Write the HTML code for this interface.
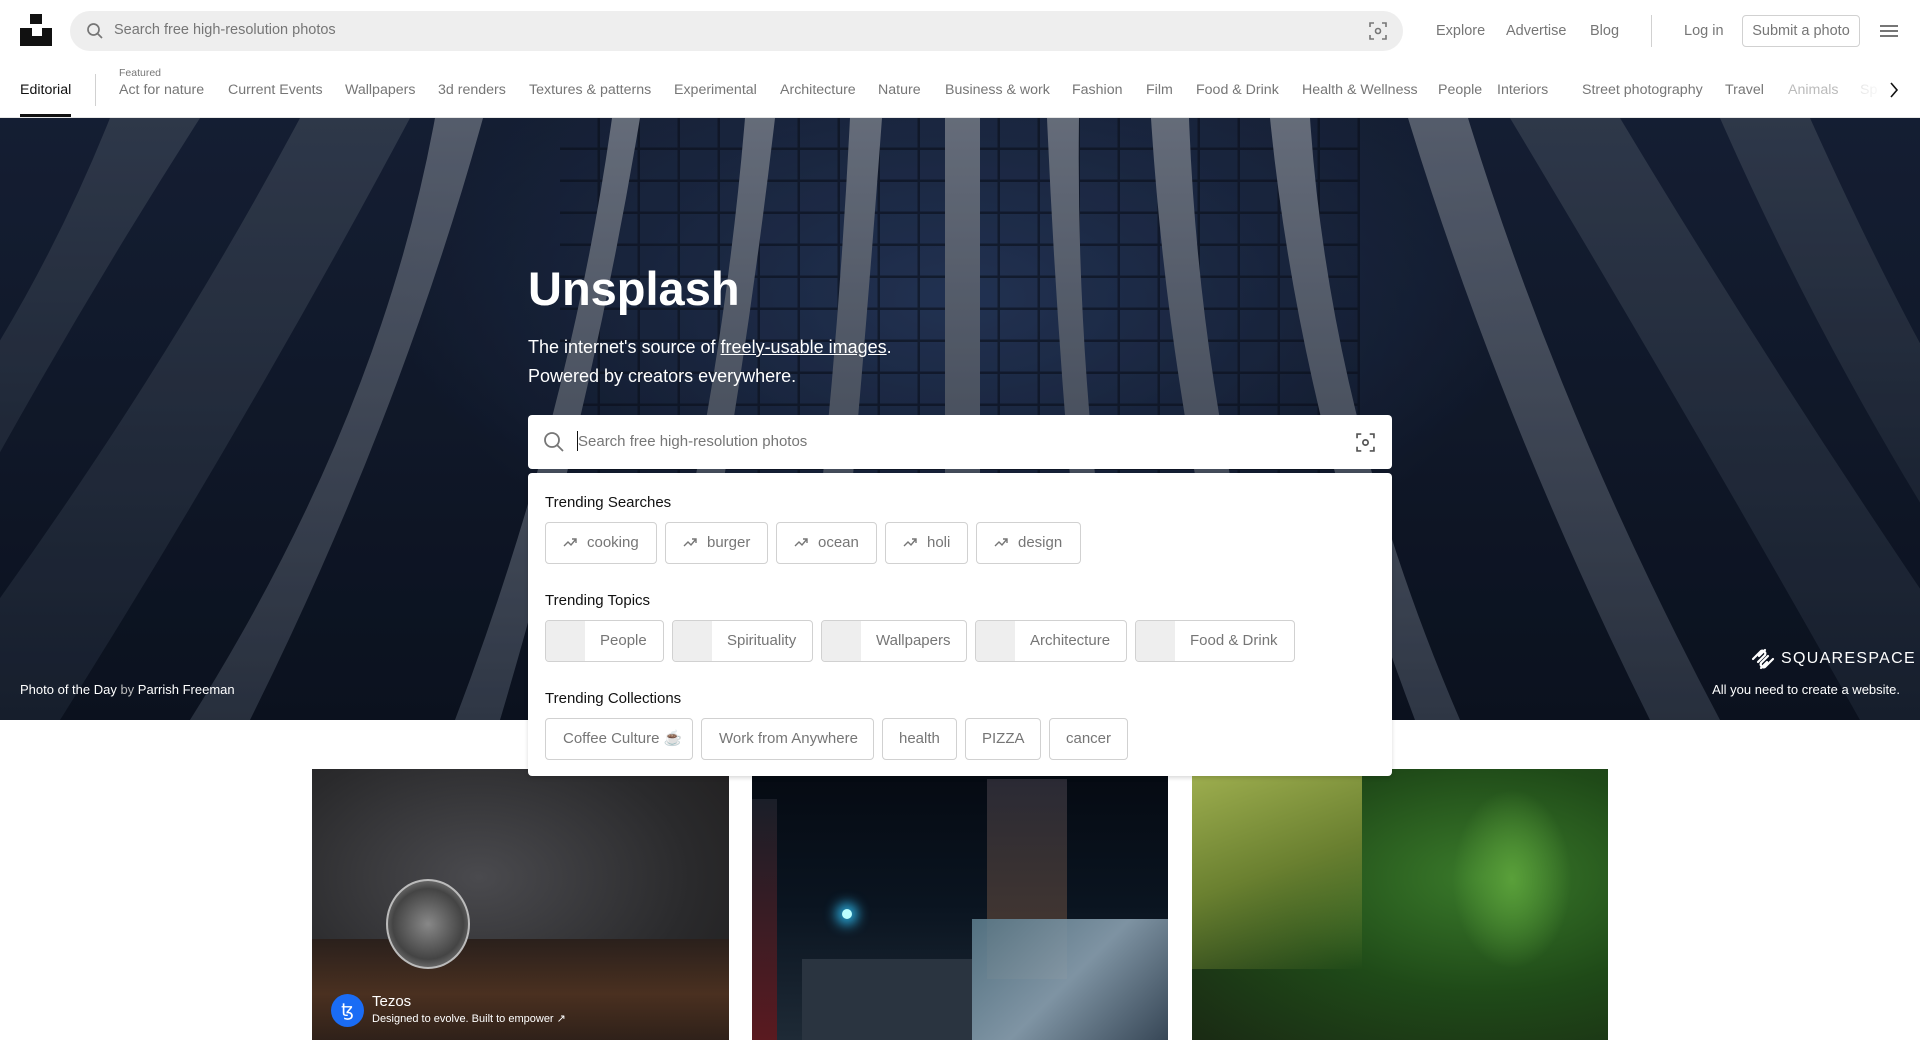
<!DOCTYPE html>
<html><head><meta charset="utf-8"><style>
*{box-sizing:border-box;margin:0;padding:0}
body{width:1920px;height:1040px;overflow:hidden;background:#fff;font-family:"Liberation Sans",sans-serif;position:relative}
.abs{position:absolute}
.top a{color:#767676;font-size:14.5px;text-decoration:none}
.cats{position:absolute;top:62px;left:0;width:1920px;height:56px;border-bottom:1px solid #e7e7e7}
.cats span{position:absolute;top:20px;font-size:14.2px;color:#767676;white-space:nowrap}
.chip{position:absolute;height:42px;border:1px solid #d1d1d1;border-radius:4px;color:#767676;font-size:15px;line-height:40px;background:#fff;white-space:nowrap}
.h{position:absolute;left:17px;font-size:15px;color:#111}
.tp i{position:absolute;left:0;top:0;width:39px;height:40px;background:#eee;border-radius:3px 0 0 3px}
</style></head><body>
<div class="abs" style="left:30px;top:14px;width:12px;height:10px;background:#111"></div>
<div class="abs" style="left:20px;top:28px;width:32px;height:18px;background:#111"></div>
<div class="abs" style="left:32px;top:28px;width:10px;height:8px;background:#fff"></div>
<div class="abs" style="left:70px;top:11px;width:1333px;height:40px;background:#eee;border-radius:20px"></div>
<svg class="abs" style="left:86px;top:22px" width="18" height="18" viewBox="0 0 18 18"><circle cx="7.5" cy="7.5" r="5.5" fill="none" stroke="#767676" stroke-width="1.7"/><path d="M11.5 11.5l4.5 4.5" stroke="#767676" stroke-width="1.7"/></svg>
<div class="abs" style="left:114px;top:22px;font-size:14.5px;color:#767676">Search free high-resolution photos</div>
<svg class="abs" style="left:1369px;top:22px" width="18" height="18" viewBox="0 0 18 18" fill="none" stroke="#767676" stroke-width="1.6"><path d="M1 5V1h4M13 1h4v4M17 13v4h-4M5 17H1v-4"/><circle cx="9" cy="9" r="2.5"/></svg>
<div class="top">
<a class="abs" style="left:1436px;top:23px">Explore</a>
<a class="abs" style="left:1506px;top:23px">Advertise</a>
<a class="abs" style="left:1590px;top:23px">Blog</a>
<div class="abs" style="left:1651px;top:15px;width:1px;height:32px;background:#d1d1d1"></div>
<a class="abs" style="left:1684px;top:23px">Log in</a>
<div class="abs" style="left:1742px;top:15px;width:118px;height:32px;border:1px solid #d1d1d1;border-radius:4px;font-size:14.5px;color:#767676;line-height:30px;text-align:center">Submit a photo</div>
<div class="abs" style="left:1880px;top:25px;width:18px;height:2px;background:#767676;box-shadow:0 5px 0 #767676,0 10px 0 #767676"></div>
</div>
<div class="cats">
<span style="left:20px;color:#111">Editorial</span>
<div class="abs" style="left:20px;top:52px;width:51px;height:3px;background:#111"></div>
<div class="abs" style="left:95px;top:12px;width:1px;height:32px;background:#d1d1d1"></div>
<span style="left:119px;top:5px;font-size:10.5px">Featured</span>
<span style="left:119px">Act for nature</span><span style="left:228px">Current Events</span><span style="left:345px">Wallpapers</span><span style="left:438px">3d renders</span><span style="left:529px">Textures &amp; patterns</span><span style="left:674px">Experimental</span><span style="left:780px">Architecture</span><span style="left:878px">Nature</span><span style="left:945px">Business &amp; work</span><span style="left:1072px">Fashion</span><span style="left:1146px">Film</span><span style="left:1196px">Food &amp; Drink</span><span style="left:1302px">Health &amp; Wellness</span><span style="left:1438px">People</span><span style="left:1497px">Interiors</span><span style="left:1582px">Street photography</span><span style="left:1725px">Travel</span><span style="left:1788px;color:#bbb">Animals</span><span style="left:1860px;color:#ddd">Sp</span>
<div class="abs" style="left:1850px;top:0;width:70px;height:55px;background:linear-gradient(90deg,rgba(255,255,255,0),#fff 50%)"></div>
<svg class="abs" style="left:1888px;top:20px" width="12" height="16" viewBox="0 0 12 16"><path d="M3 1l6 7-6 7" fill="none" stroke="#111" stroke-width="1.6"/></svg>
</div>
<svg class="abs" style="left:0;top:118px" width="1920" height="602" viewBox="0 0 1920 602">
<defs><linearGradient id="bg" x1="0" y1="0" x2="0" y2="1"><stop offset="0" stop-color="#1a2640"/><stop offset="1" stop-color="#0e1626"/></linearGradient>
<radialGradient id="ct" cx=".5" cy=".3" r=".5"><stop offset="0" stop-color="#2a3e66"/><stop offset="1" stop-color="#2a3e66" stop-opacity="0"/></radialGradient>
<pattern id="win" width="40" height="32" patternUnits="userSpaceOnUse"><rect width="40" height="32" fill="none"/><path d="M0 31h40M39 0v32" stroke="#0c1220" stroke-width="3"/></pattern>
<linearGradient id="st" x1="0" y1="0" x2="0" y2="1"><stop offset="0" stop-color="#7e8798"/><stop offset="1" stop-color="#3a4456"/></linearGradient>
<linearGradient id="so" x1="0" y1="0" x2="0" y2="1"><stop offset="0" stop-color="#3a465c"/><stop offset="1" stop-color="#1c2638"/></linearGradient></defs>
<rect width="1920" height="602" fill="url(#bg)"/>
<rect x="400" y="0" width="1120" height="602" fill="url(#ct)"/>
<rect x="560" y="0" width="800" height="500" fill="url(#win)" opacity=".6"/>
<g fill="url(#so)">
<path d="M300 0h110Q250 300 60 602h-150Q140 300 300 0z"/>
<path d="M1510 0h110Q1800 300 2010 602h-150Q1690 300 1510 0z"/>
<path d="M110 0h90Q40 250 -100 520v-150Q30 200 110 0z"/>
<path d="M1720 0h90Q1900 200 1980 330v150Q1830 250 1720 0z"/>
</g>
<g fill="url(#st)">
<path d="M945 0h35v602h-35z"/>
<path d="M850 0h32Q860 300 830 602h-36Q835 300 850 0z"/>
<path d="M1047 0h32Q1075 300 1130 602h-36Q1060 300 1047 0z"/>
<path d="M745 0h30Q740 300 680 602h-40Q720 300 745 0z"/>
<path d="M1151 0h38Q1200 300 1290 602h-40Q1170 300 1151 0z"/>
<path d="M612 0h28Q590 300 500 602h-45Q570 300 612 0z"/>
<path d="M1270 0h40Q1330 300 1460 602h-45Q1300 300 1270 0z"/>
<path d="M435 0h48Q400 300 250 602h-60Q380 300 435 0z" opacity=".8"/>
<path d="M1408 0h60Q1560 300 1720 602h-70Q1500 300 1408 0z" opacity=".8"/>
</g>
<rect width="1920" height="602" fill="#000" opacity=".2"/>
</svg>
<div class="abs" style="left:528px;top:261px;font-size:47px;font-weight:bold;color:#fff">Unsplash</div>
<div class="abs" style="left:528px;top:333px;font-size:18px;color:#fff;line-height:29px">The internet's source of <span style="text-decoration:underline">freely-usable images</span>.<br>Powered by creators everywhere.</div>
<div class="abs" style="left:20px;top:682px;font-size:13px;color:#fff">Photo of the Day <span style="color:#bbb">by</span> Parrish Freeman</div>
<svg class="abs" style="left:1750px;top:647px" width="26" height="24" viewBox="0 0 26 24" fill="none" stroke="#fff" stroke-width="2.2" stroke-linecap="round"><path d="M3 12l8-8a3 3 0 014 4l-7 7M9 9l6-6M23 12l-8 8a3 3 0 01-4-4l7-7M17 15l-6 6"/></svg>
<div class="abs" style="left:1781px;top:650px;font-size:16px;color:#fff;letter-spacing:1.3px">SQUARESPACE</div>
<div class="abs" style="right:20px;top:682px;font-size:13px;color:#fff">All you need to create a website.</div>
<div class="abs" style="left:312px;top:769px;width:417px;height:271px;background:radial-gradient(ellipse at 40% 40%,#4a4a4e,#2a2a2c 60%,#1e1c1c);overflow:hidden">
<div class="abs" style="left:0;top:170px;width:417px;height:110px;background:linear-gradient(#2a201c,#4a3020 50%,#2a1e18)"></div>
<div class="abs" style="left:74px;top:110px;width:84px;height:90px;border-radius:50%;background:radial-gradient(circle,#888,#444 60%,#aaa);border:2px solid #bbb"></div>
<div class="abs" style="left:19px;top:225px;width:33px;height:33px;border-radius:50%;background:#1a6cf5;color:#fff;text-align:center;line-height:33px;font-size:18px">ꜩ</div>
<div class="abs" style="left:60px;top:224px;font-size:15px;color:#fff">Tezos</div>
<div class="abs" style="left:60px;top:243px;font-size:11px;color:#fff">Designed to evolve. Built to empower ↗</div>
</div>
<div class="abs" style="left:752px;top:769px;width:416px;height:271px;background:linear-gradient(180deg,#050a12,#0a1420 50%,#1e2a36);overflow:hidden">
<div class="abs" style="left:0;top:30px;width:25px;height:241px;background:linear-gradient(#1a1e28,#5a1a20)"></div>
<div class="abs" style="left:235px;top:10px;width:80px;height:200px;background:linear-gradient(#2a2a34,#4a3a30)"></div>
<div class="abs" style="left:220px;top:150px;width:196px;height:121px;background:linear-gradient(135deg,#5a7a8a,#8aa0b0 50%,#3a4a5a);opacity:.9"></div>
<div class="abs" style="left:50px;top:190px;width:170px;height:81px;background:#2a3440"></div>
<div class="abs" style="left:90px;top:140px;width:10px;height:10px;border-radius:50%;background:#bff;box-shadow:0 0 12px 6px #2aa8d8"></div>
</div>
<div class="abs" style="left:1192px;top:769px;width:416px;height:271px;background:radial-gradient(ellipse at 70% 40%,#3a7a2a,#1f4a18 50%,#1a2a14);overflow:hidden">
<div class="abs" style="left:0;top:0;width:170px;height:200px;background:linear-gradient(160deg,#a0b050,#6a8030 50%,rgba(40,60,20,0))"></div>
<div class="abs" style="left:260px;top:20px;width:120px;height:180px;background:radial-gradient(ellipse,#5aa03a,rgba(40,90,30,0) 70%)"></div>
</div>
<div class="abs" style="left:528px;top:415px;width:864px;height:54px;background:#fff;border-radius:4px"></div>
<svg class="abs" style="left:543px;top:431px" width="22" height="22" viewBox="0 0 22 22"><circle cx="9" cy="9" r="7" fill="none" stroke="#767676" stroke-width="1.8"/><path d="M14 14l6 6" stroke="#767676" stroke-width="1.8"/></svg>
<div class="abs" style="left:577px;top:431px;width:1px;height:20px;background:#111"></div>
<div class="abs" style="left:578px;top:433px;font-size:15px;color:#767676">Search free high-resolution photos</div>
<svg class="abs" style="left:1356px;top:433px" width="19" height="19" viewBox="0 0 18 18" fill="none" stroke="#555" stroke-width="1.6"><path d="M1 5V1h4M13 1h4v4M17 13v4h-4M5 17H1v-4"/><circle cx="9" cy="9" r="2.5"/></svg>
<div class="abs" style="left:528px;top:473px;width:864px;height:303px;background:#fff;border-radius:4px;box-shadow:0 2px 4px rgba(0,0,0,.15)">
<div class="h" style="top:21px">Trending Searches</div>
<div class="h" style="top:119px">Trending Topics</div>
<div class="h" style="top:217px">Trending Collections</div>
</div>
<div>
<div class="chip" style="left:545px;top:522px;width:112px;padding-left:17px"><svg width="14" height="10" viewBox="0 0 14 10" style="margin-right:10px"><path d="M1 9l4-4 3 3 5-6M9 2h4v4" fill="none" stroke="#767676" stroke-width="1.4"/></svg>cooking</div>
<div class="chip" style="left:665px;top:522px;width:103px;padding-left:17px"><svg width="14" height="10" viewBox="0 0 14 10" style="margin-right:10px"><path d="M1 9l4-4 3 3 5-6M9 2h4v4" fill="none" stroke="#767676" stroke-width="1.4"/></svg>burger</div>
<div class="chip" style="left:776px;top:522px;width:101px;padding-left:17px"><svg width="14" height="10" viewBox="0 0 14 10" style="margin-right:10px"><path d="M1 9l4-4 3 3 5-6M9 2h4v4" fill="none" stroke="#767676" stroke-width="1.4"/></svg>ocean</div>
<div class="chip" style="left:885px;top:522px;width:83px;padding-left:17px"><svg width="14" height="10" viewBox="0 0 14 10" style="margin-right:10px"><path d="M1 9l4-4 3 3 5-6M9 2h4v4" fill="none" stroke="#767676" stroke-width="1.4"/></svg>holi</div>
<div class="chip" style="left:976px;top:522px;width:105px;padding-left:17px"><svg width="14" height="10" viewBox="0 0 14 10" style="margin-right:10px"><path d="M1 9l4-4 3 3 5-6M9 2h4v4" fill="none" stroke="#767676" stroke-width="1.4"/></svg>design</div>
<div class="chip tp" style="left:545px;top:620px;width:119px"><i></i><span style="position:absolute;left:54px">People</span></div>
<div class="chip tp" style="left:672px;top:620px;width:141px"><i></i><span style="position:absolute;left:54px">Spirituality</span></div>
<div class="chip tp" style="left:821px;top:620px;width:146px"><i></i><span style="position:absolute;left:54px">Wallpapers</span></div>
<div class="chip tp" style="left:975px;top:620px;width:152px"><i></i><span style="position:absolute;left:54px">Architecture</span></div>
<div class="chip tp" style="left:1135px;top:620px;width:160px"><i></i><span style="position:absolute;left:54px">Food &amp; Drink</span></div>
<div class="chip" style="left:545px;top:718px;width:148px;padding-left:17px">Coffee Culture ☕</div>
<div class="chip" style="left:701px;top:718px;width:173px;padding-left:17px">Work from Anywhere</div>
<div class="chip" style="left:882px;top:718px;width:75px;padding-left:16px">health</div>
<div class="chip" style="left:965px;top:718px;width:76px;padding-left:16px">PIZZA</div>
<div class="chip" style="left:1049px;top:718px;width:79px;padding-left:16px">cancer</div>
</div>
</body></html>
